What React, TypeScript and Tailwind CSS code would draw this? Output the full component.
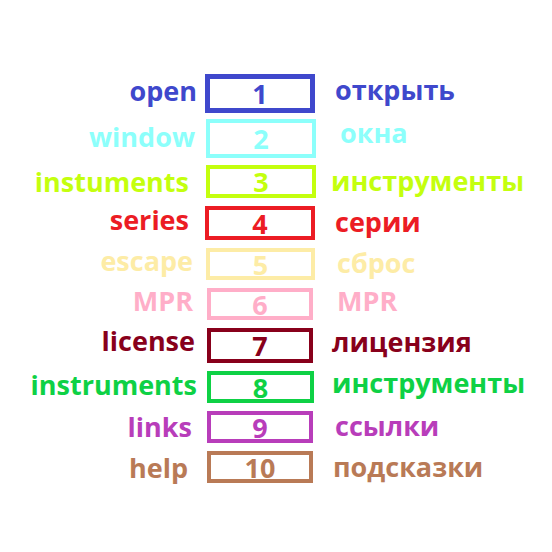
import React from "react";

type Row = {
  en: string;
  ru: string;
  n: string;
  mt: string;
  h: string;
  w: string;
  pr: string;
  ml: string;
  rml: string;
  border: string;
  bw: string;
  text: string;
  lmb: string;
  rmb: string;
};

const rows: Row[] = [
  { en: "open", ru: "открыть", n: "1", mt: "mt-[74px]", h: "h-[39px]", w: "w-[110px]", pr: "pr-[0px]", ml: "ml-[8px]", rml: "ml-[20px]", border: "border-[#3F48CC]", bw: "border-[5px]", text: "text-[#3F48CC]", lmb: "mb-[6px]", rmb: "mb-[9px]" },
  { en: "window", ru: "окна", n: "2", mt: "mt-[6px]", h: "h-[39px]", w: "w-[110px]", pr: "pr-[2px]", ml: "ml-[9px]", rml: "ml-[24px]", border: "border-[#8CFFFB]", bw: "border-[4px]", text: "text-[#8CFFFB]", lmb: "mb-[4px]", rmb: "mb-[12px]" },
  { en: "instuments", ru: "инструменты", n: "3", mt: "mt-[7px]", h: "h-[33px]", w: "w-[110px]", pr: "pr-[8px]", ml: "ml-[9px]", rml: "ml-[15px]", border: "border-[#C4FF0E]", bw: "border-[4px]", text: "text-[#C4FF0E]", lmb: "mb-[0px]", rmb: "mb-[3px]" },
  { en: "series", ru: "серии", n: "4", mt: "mt-[8px]", h: "h-[34px]", w: "w-[110px]", pr: "pr-[8px]", ml: "ml-[8px]", rml: "ml-[20px]", border: "border-[#EC1C24]", bw: "border-[4px]", text: "text-[#EC1C24]", lmb: "mb-[8px]", rmb: "mb-[4px]" },
  { en: "escape", ru: "сброс", n: "5", mt: "mt-[8px]", h: "h-[32px]", w: "w-[109px]", pr: "pr-[4px]", ml: "ml-[9px]", rml: "ml-[22px]", border: "border-[#FDECA6]", bw: "border-[4px]", text: "text-[#FDECA6]", lmb: "mb-[8px]", rmb: "mb-[4px]" },
  { en: "MPR", ru: "MPR", n: "6", mt: "mt-[8px]", h: "h-[32px]", w: "w-[106px]", pr: "pr-[4px]", ml: "ml-[10px]", rml: "ml-[24px]", border: "border-[#FFAEC8]", bw: "border-[4px]", text: "text-[#FFAEC8]", lmb: "mb-[8px]", rmb: "mb-[7px]" },
  { en: "license", ru: "лицензия", n: "7", mt: "mt-[8px]", h: "h-[35px]", w: "w-[106px]", pr: "pr-[2px]", ml: "ml-[10px]", rml: "ml-[19px]", border: "border-[#88001B]", bw: "border-[4px]", text: "text-[#88001B]", lmb: "mb-[10px]", rmb: "mb-[9px]" },
  { en: "instruments", ru: "инструменты", n: "8", mt: "mt-[8px]", h: "h-[32px]", w: "w-[107px]", pr: "pr-[0px]", ml: "ml-[10px]", rml: "ml-[18px]", border: "border-[#0ED145]", bw: "border-[4px]", text: "text-[#0ED145]", lmb: "mb-[6px]", rmb: "mb-[9px]" },
  { en: "links", ru: "ссылки", n: "9", mt: "mt-[8px]", h: "h-[32px]", w: "w-[106px]", pr: "pr-[5px]", ml: "ml-[10px]", rml: "ml-[22px]", border: "border-[#B83DBA]", bw: "border-[4px]", text: "text-[#B83DBA]", lmb: "mb-[2px]", rmb: "mb-[4px]" },
  { en: "help", ru: "подсказки", n: "10", mt: "mt-[8px]", h: "h-[32px]", w: "w-[106px]", pr: "pr-[9px]", ml: "ml-[10px]", rml: "ml-[20px]", border: "border-[#B97A56]", bw: "border-[4px]", text: "text-[#B97A56]", lmb: "mb-[0px]", rmb: "mb-[2px]" },
];

export default function App() {
  return (
    <div
      className="w-[552px] h-[552px] bg-white overflow-hidden flex flex-col"
      style={{ fontFamily: '"Open Sans", "Noto Sans", sans-serif' }}
    >
      {rows.map((r) => (
        <div key={r.n} className={`flex items-center ${r.mt} ${r.h}`}>
          <div
            className={`w-[197px] shrink-0 text-right font-bold text-[27px] leading-none whitespace-nowrap ${r.text} ${r.pr} ${r.lmb}`}
          >
            {r.en}
          </div>
          <div
            className={`shrink-0 ${r.ml} ${r.w} ${r.h} ${r.bw} ${r.border} flex items-center justify-center font-bold text-[27px] leading-none ${r.text}`}
          >
            {r.n}
          </div>
          <div
            className={`${r.rml} ${r.rmb} font-bold text-[27px] leading-none whitespace-nowrap ${r.text}`}
          >
            {r.ru}
          </div>
        </div>
      ))}
    </div>
  );
}
